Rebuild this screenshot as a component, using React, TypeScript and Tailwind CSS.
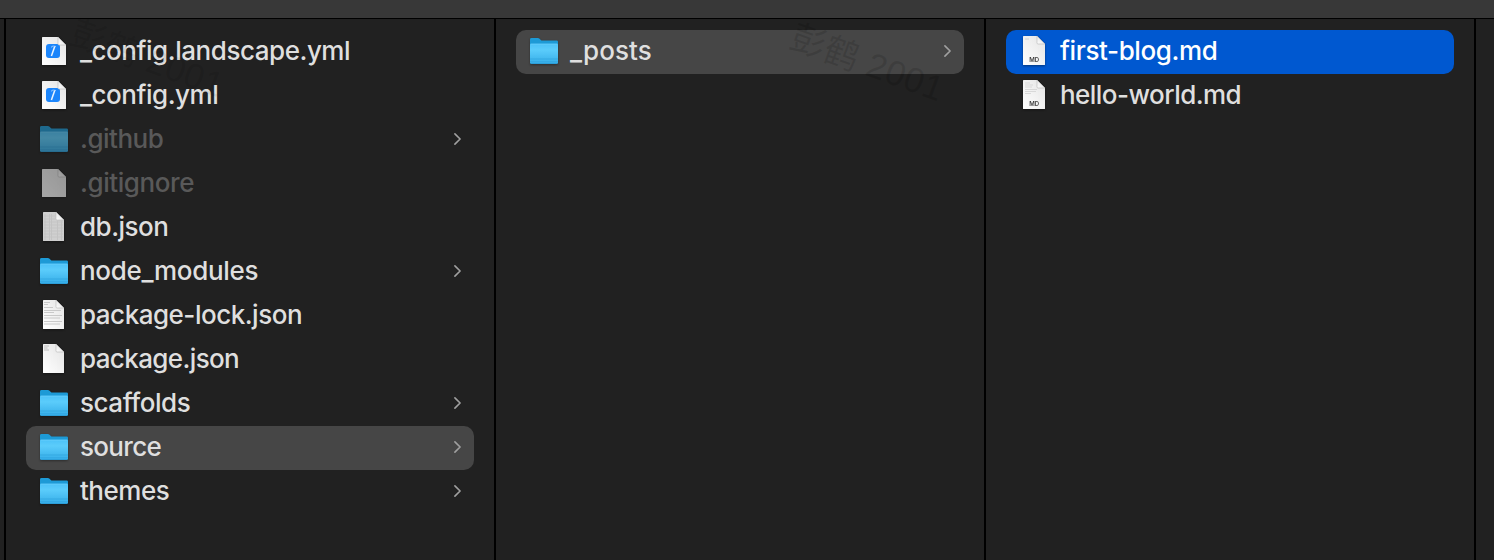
import type { ReactNode } from "react";

type Kind = "xcode" | "folder" | "blank" | "dense" | "lines" | "short" | "mdShort" | "mdLong";
type Entry = {
  name: string;
  kind: Kind;
  tracking: string;
  dim?: boolean;
  arrow?: boolean;
  state?: "active" | "path";
};

const project: Entry[] = [
  { name: "_config.landscape.yml", kind: "xcode", tracking: "tracking-[-0.46px]" },
  { name: "_config.yml", kind: "xcode", tracking: "tracking-[-0.47px]" },
  { name: ".github", kind: "folder", tracking: "tracking-[-0.5px]", dim: true, arrow: true },
  { name: ".gitignore", kind: "blank", tracking: "tracking-[-0.42px]", dim: true },
  { name: "db.json", kind: "dense", tracking: "tracking-[-0.5px]" },
  { name: "node_modules", kind: "folder", tracking: "tracking-[-0.31px]", arrow: true },
  { name: "package-lock.json", kind: "lines", tracking: "tracking-[-0.49px]" },
  { name: "package.json", kind: "short", tracking: "tracking-[-0.62px]" },
  { name: "scaffolds", kind: "folder", tracking: "tracking-[-0.46px]", arrow: true },
  { name: "source", kind: "folder", tracking: "tracking-[-0.68px]", arrow: true, state: "path" },
  { name: "themes", kind: "folder", tracking: "tracking-[-0.5px]", arrow: true },
];
const source: Entry[] = [
  { name: "_posts", kind: "folder", tracking: "tracking-[0.1px]", arrow: true, state: "path" },
];
const posts: Entry[] = [
  { name: "first-blog.md", kind: "mdShort", tracking: "tracking-[-0.38px]", state: "active" },
  { name: "hello-world.md", kind: "mdLong", tracking: "tracking-[-0.54px]" },
];

function Gradients() {
  return (
    <svg width="0" height="0" className="absolute" aria-hidden="true">
      <defs>
        <linearGradient id="folderFront" x1="0" y1="0" x2="0" y2="1">
          <stop offset="0" stopColor="#4cc2f8" />
          <stop offset="0.3" stopColor="#5bccfb" />
          <stop offset="1" stopColor="#35ade8" />
        </linearGradient>
        <linearGradient id="paper" x1="0" y1="1" x2="1" y2="0">
          <stop offset="0" stopColor="#ffffff" />
          <stop offset="1" stopColor="#e4e4e4" />
        </linearGradient>
        <linearGradient id="fold" x1="0" y1="1" x2="1" y2="0">
          <stop offset="0" stopColor="#ffffff" />
          <stop offset="1" stopColor="#d8d8d8" />
        </linearGradient>
      </defs>
    </svg>
  );
}

function Folder() {
  return (
    <svg width="32" height="32" viewBox="0 0 32 32" className="drop-shadow-[0_1px_1px_rgba(0,0,0,0.35)]">
      <path d="M2 4.4Q2 3 3.4 3H9.8Q10.8 3 11.6 3.7L12.8 4.9Q13.4 5.4 14.4 5.4H28.6Q30 5.4 30 6.8V12H2Z" fill="#1d9ad6" />
      <path d="M2 10Q2 8.8 3.2 8.8H28.8Q30 8.8 30 10V27.6Q30 29 28.6 29H3.4Q2 29 2 27.6Z" fill="url(#folderFront)" />
      <path d="M2.5 9.1H29.5" stroke="#75d5fd" strokeWidth="0.6" />
      <path d="M2 24H30" stroke="#2fa3dd" strokeWidth="0.7" />
      <path d="M2 26.7H30" stroke="#2fa3dd" strokeWidth="0.6" />
      <path d="M2.6 28.6H29.4" stroke="#2a98d1" strokeWidth="0.8" />
    </svg>
  );
}

function Sheet({ wide, right = 26, children, gray }: { wide?: boolean; right?: number; children?: ReactNode; gray?: boolean }) {
  const left = wide ? 4 : 5;
  const r = wide ? 28 : right;
  const f = 8;
  const top = wide ? 2 : 1;
  const bottom = 30;
  return (
    <svg width="32" height="32" viewBox="0 0 32 32" className="drop-shadow-[0_1px_1px_rgba(0,0,0,0.4)]">
      <path
        d={`M${left} ${top + 0.5}Q${left} ${top} ${left + 0.5} ${top}H${r - f}L${r} ${top + f}V${bottom - 0.5}Q${r} ${bottom} ${r - 0.5} ${bottom}H${left + 0.5}Q${left} ${bottom} ${left} ${bottom - 0.5}Z`}
        fill={gray ? "#cfcfcf" : "url(#paper)"}
      />
      {children}
      <path d={`M${r - f} ${top}V${top + f - 1}Q${r - f} ${top + f} ${r - f + 1} ${top + f}H${r}Z`} fill="url(#fold)" stroke="#a9a9a9" strokeWidth="0.5" />
    </svg>
  );
}

function Icon({ kind }: { kind: Kind }) {
  switch (kind) {
    case "folder":
      return <Folder />;
    case "xcode":
      return (
        <Sheet wide>
          <rect x="8" y="9" width="14" height="14" rx="3" fill="#1b85fb" />
          <path d="M16.8 11.2L13.4 21" stroke="#eaf4ff" strokeWidth="1.5" />
          <path d="M13 12.4Q14 11 15.6 11.1L18 11.5" stroke="#a9d3ff" strokeWidth="0.9" fill="none" />
        </Sheet>
      );
    case "blank":
      return <Sheet wide />;
    case "dense":
      return (
        <Sheet gray>
          <path d="M7 3V29M11.5 3V29M13.5 3V29M19.5 10V29M23.5 10V29" stroke="#bdbdbd" strokeWidth="0.7" />
          <path d="M6 5H17M6 8H17M6 11H25M6 14H25M6 17H25M6 20H25M6 23H25M6 26H25" stroke="#c3c3c3" strokeWidth="0.8" />
        </Sheet>
      );
    case "lines":
      return (
        <Sheet>
          <path d="M6 3.5H12M6 5.5H10M6 8.5H15M6 11.5H23M6 13.5H16M6 16.5H24M6 19H22M6 22.5H24M6 25H22" stroke="#c4c4c4" strokeWidth="0.9" />
        </Sheet>
      );
    case "short":
      return (
        <Sheet>
          <path d="M6 3H11M6 5H9.5M6 7H11" stroke="#b8b8b8" strokeWidth="0.9" />
        </Sheet>
      );
    case "mdShort":
    case "mdLong":
      return (
        <Sheet right={27}>
          {kind === "mdShort" ? (
            <path d="M7 4H11" stroke="#cccccc" strokeWidth="0.8" />
          ) : (
            <path d="M7 4H12M7 6H15M7 8H14M7 10.5H19M7 12.5H18M7 14.5H13" stroke="#d2d2d2" strokeWidth="0.8" />
          )}
          <text x="16.2" y="27" textAnchor="middle" fontSize="6" fontWeight="600" letterSpacing="0" fill="#3b3b3b" className="font-['Inter',sans-serif]">
            MD
          </text>
        </Sheet>
      );
  }
}

function Row({ entry }: { entry: Entry }) {
  const bg = entry.state === "active" ? "bg-[#0058d0]" : entry.state === "path" ? "bg-[#464646]" : "";
  const color = entry.state === "active" ? "text-white" : entry.dim ? "text-[#595959]" : "text-[#dfdfdf]";
  return (
    <li className={`flex h-11 items-center rounded-[10px] pl-3 pr-2.5 ${bg}`}>
      <span className={`mb-0.5 h-8 w-8 shrink-0 ${entry.dim ? "opacity-60" : ""}`}>
        <Icon kind={entry.kind} />
      </span>
      <span className={`ml-2.5 flex-1 whitespace-nowrap pb-0.5 text-[26px] font-[450] leading-8 ${entry.tracking} ${color}`}>
        {entry.name}
      </span>
      {entry.arrow && (
        <svg width="12" height="16" viewBox="0 0 12 16" fill="none" className="mb-0.5 shrink-0">
          <path d="M2.9 2.9L8.1 8L2.9 13.1" stroke="#a0a0a0" strokeWidth="1.6" strokeLinecap="round" strokeLinejoin="round" />
        </svg>
      )}
    </li>
  );
}

function Column({ entries }: { entries: Entry[] }) {
  return (
    <ul className="w-[490px] shrink-0 border-r-2 border-black px-5 pt-[11px]">
      {entries.map((entry) => (
        <Row key={entry.name} entry={entry} />
      ))}
    </ul>
  );
}

export default function App() {
  return (
    <div className="relative flex h-[560px] w-[1494px] flex-col overflow-hidden bg-[#212121] font-['Inter','Noto_Sans_CJK_SC',sans-serif]">
      <Gradients />
      <header className="h-[19px] shrink-0 border-b border-black bg-[#383838]" />
      <main className="flex flex-1">
        <div className="w-1.5 shrink-0 border-r-2 border-black" />
        <Column entries={project} />
        <Column entries={source} />
        <Column entries={posts} />
      </main>
      <span className="pointer-events-none absolute left-[787px] top-[39px] rotate-[20deg] whitespace-nowrap font-['Liberation_Sans','Noto_Sans_CJK_SC',sans-serif] text-[35px] leading-[48px] tracking-[0.4px] text-black/12">
        彭鹤 2001
      </span>
      <span className="pointer-events-none absolute left-[67px] top-[35px] rotate-[20deg] whitespace-nowrap font-['Liberation_Sans','Noto_Sans_CJK_SC',sans-serif] text-[35px] leading-[48px] tracking-[0.4px] text-black/8">
        彭鹤 2001
      </span>
    </div>
  );
}
